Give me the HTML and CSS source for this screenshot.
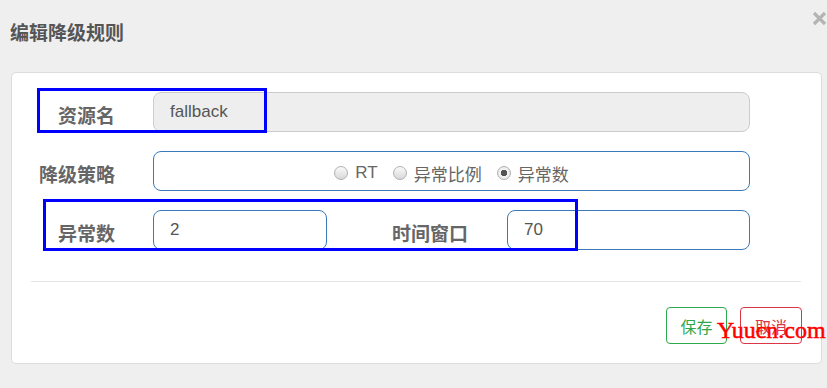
FILE: index.html
```html
<!DOCTYPE html>
<html lang="zh-CN">
<head>
<meta charset="utf-8">
<title>编辑降级规则</title>
<link rel="stylesheet" href="styles.css">
</head>
<body>
<div class="modal">
  <div class="header">
    <h4 class="title">编辑降级规则</h4>
    <span class="close"><svg width="15" height="15" viewBox="0 0 15 15"><path d="M2 2 L13 13 M13 2 L2 13" stroke="#b4b4b4" stroke-width="3.2" stroke-linecap="butt"/></svg></span>
  </div>
  <div class="card">
    <div class="form">
      <div class="row">
        <label class="label">资源名</label>
        <div class="input input-disabled input-wide">fallback</div>
      </div>
      <div class="row">
        <label class="label">降级策略</label>
        <div class="input input-wide radios">
          <span class="radio"><span class="dot"></span>RT</span>
          <span class="radio"><span class="dot"></span>异常比例</span>
          <span class="radio"><span class="dot checked"></span>异常数</span>
        </div>
      </div>
      <div class="row">
        <label class="label">异常数</label>
        <div class="input input-small">2</div>
        <label class="label label-second">时间窗口</label>
        <div class="input input-medium">70</div>
      </div>
    </div>
    <div class="divider"></div>
    <div class="footer">
      <button class="btn btn-save">保存</button>
      <button class="btn btn-cancel">取消</button>
    </div>
  </div>
</div>
<div class="mark mark-1"></div>
<div class="mark mark-2"></div>
<div class="watermark">Yuucn.com</div>
</body>
</html>
```
FILE: styles.css
```css
* { box-sizing: border-box; }
html, body {
  margin: 0;
  padding: 0;
  background: #efefef;
  width: 827px;
  height: 388px;
  overflow: hidden;
  font-family: "Liberation Sans", "Noto Sans CJK SC", sans-serif;
}
.header {
  height: 72px;
  display: flex;
  justify-content: space-between;
  align-items: flex-start;
  padding: 21px 0 0 10px;
}
.title {
  margin: 0;
  font-family: "Noto Sans CJK SC", sans-serif;
  font-size: 19px;
  line-height: 21px;
  font-weight: bold;
  color: #555;
}
.close {
  display: block;
  margin-top: -10px;
  width: 15px;
  height: 15px;
}
.card {
  margin: 0 5px 0 11px;
  background: #fff;
  border: 1px solid #dcdcdc;
  border-radius: 5px;
  padding: 19px 20px 19px 19px;
}
.form {
  display: flex;
  flex-direction: column;
  gap: 19px;
}
.row {
  display: flex;
  align-items: center;
  height: 40px;
}
.label {
  width: 84px;
  flex: none;
  text-align: right;
  font-family: "Noto Sans CJK SC", sans-serif;
  font-size: 19px;
  font-weight: bold;
  color: #666;
  padding-top: 4px;
  margin-right: 38px;
}
.label-second {
  width: 141px;
  margin-right: 39px;
}
.input {
  height: 40px;
  border: 1px solid #3a7ab8;
  border-radius: 8px;
  padding: 0 16px;
  display: flex;
  align-items: center;
  font-size: 17px;
  color: #555;
  background: #fff;
}
.input-disabled {
  background: #eee;
  border-color: #ccc;
}
.input-wide { width: 597px; }
.input-small { width: 174px; }
.input-medium { width: 243px; }
.radios {
  justify-content: center;
  padding-top: 4px;
  font-family: "Liberation Sans", "Noto Sans CJK SC", sans-serif;
  font-size: 17px;
  color: #666;
  gap: 15px;
}
.radio {
  display: inline-flex;
  align-items: center;
  gap: 7px;
}
.dot {
  display: inline-block;
  width: 14px;
  height: 14px;
  border-radius: 50%;
  border: 1px solid #b0b0b0;
  background: linear-gradient(#fafafa, #d8d8d8);
}
.dot.checked {
  background: radial-gradient(circle, #555 0 3px, #f4f4f4 3.5px, #e0e0e0 100%);
}
.divider {
  height: 1px;
  background: #e5e5e5;
  margin-top: 31px;
}
.footer {
  display: flex;
  justify-content: flex-end;
  gap: 13px;
  margin-top: 25px;
  margin-right: -1px;
}
.btn {
  height: 37px;
  border-radius: 4px;
  background: #fff;
  font-family: "Noto Sans CJK SC", sans-serif;
  font-size: 16px;
  padding: 0;
}
.btn-save {
  width: 61px;
  border: 1px solid #2ea84a;
  color: #2ea84a;
}
.btn-cancel {
  width: 62px;
  border: 1px solid #dc3545;
  color: #dc3545;
}
.mark {
  position: absolute;
  border: 3px solid #0000ff;
}
.mark-1 { left: 37px; top: 88px; width: 230px; height: 45px; }
.mark-2 { left: 43px; top: 199px; width: 535px; height: 52px; }
.watermark {
  position: absolute;
  left: 717px;
  top: 318px;
  font-family: "Liberation Serif", serif;
  font-size: 24px;
  line-height: 24px;
  color: #ff0000;
  -webkit-text-stroke: 0.5px #ff0000;
}
```
